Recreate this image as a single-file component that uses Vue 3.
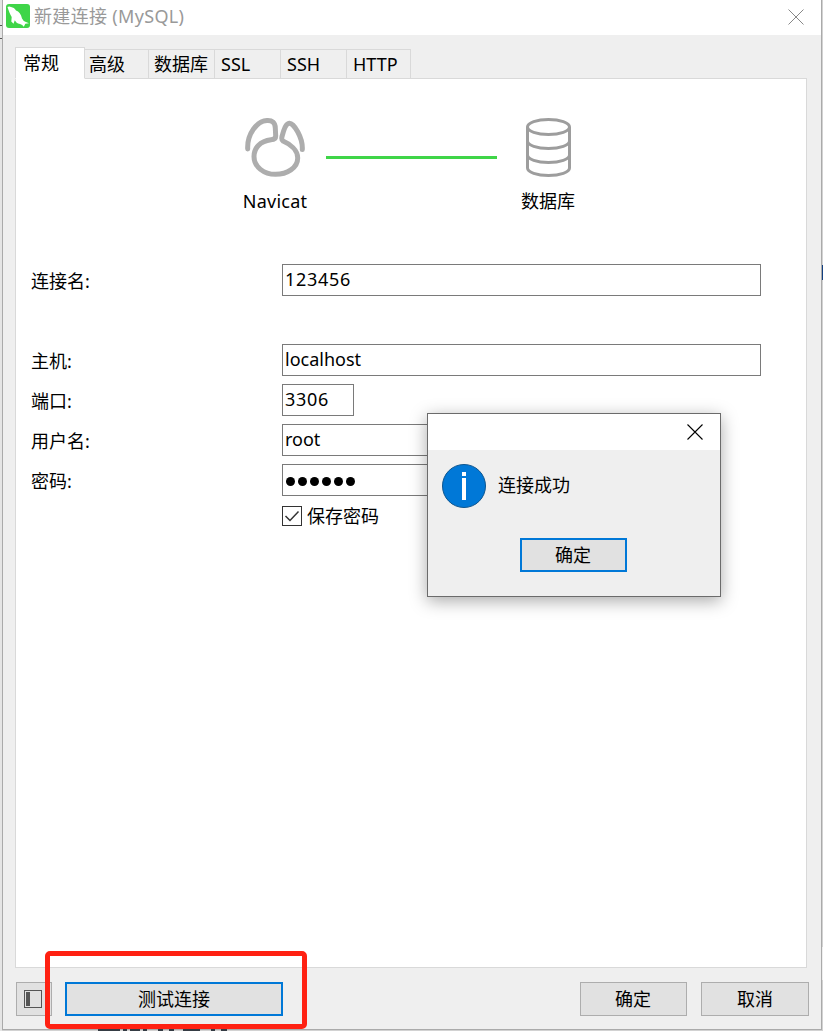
<script setup>
import { ref } from 'vue'

const tabs = [
  { label: '常规', width: 70 },
  { label: '高级', width: 64 },
  { label: '数据库', width: 66 },
  { label: 'SSL', width: 66, latin: true },
  { label: 'SSH', width: 66, latin: true },
  { label: 'HTTP', width: 64, latin: true },
]
const active = ref(0)
const fields = [
  { label: '连接名:', value: '123456', cls: 'digits spaced' },
  { label: '主机:', value: 'localhost', cls: '' },
  { label: '端口:', value: '3306', cls: 'digits short' },
  { label: '用户名:', value: 'root', cls: 'medium' },
]
</script>

<template>
  <div class="screen">
    <div class="behind">
      <i class="b-left"></i><i class="b-right"></i><i class="b-line one"></i><i class="b-line two"></i><i class="b-low"></i>
    </div>
    <main class="window">
      <header class="titlebar">
        <svg class="logo" width="24" height="24" viewBox="0 0 24 24">
          <rect width="24" height="24" rx="3" fill="#3fd548" />
          <path d="M1.500 3Q3 2 5 3C7 3.300 9 4.500 10 6.500C13 7.500 15 10 16 14.500Q17 17 20 18L23 19.300L19.300 19.700L17.800 22.800Q16.500 20.500 14 20C11 20 10 18 8.800 16.300L7.500 19.800L5.300 17.500L5.700 13C4 10 2.500 6.500 1.500 3Z" fill="#fff" />
        </svg>
        <span class="title">新建连接 (MySQL)</span>
        <svg class="close" width="16" height="16" viewBox="0 0 16 16"><path d="M.5.5l15 15M15.500.5l-15 15" stroke="#888" fill="none" /></svg>
      </header>
      <nav class="tabs">
        <button v-for="(t, i) in tabs" :key="t.label" class="tab" :class="{ active: active === i, latin: t.latin }" :style="{ width: t.width + 'px' }" @click="active = i"><span>{{ t.label }}</span></button>
      </nav>
      <section class="panel">
        <div class="diagram">
          <figure class="node app-node">
            <svg width="64" height="62" viewBox="0 0 64 62" fill="none" stroke="#adadad" stroke-width="5" stroke-linecap="round" stroke-linejoin="round">
              <path d="M3.700 33C3 18 13 5 23 4.500Q31 4 31.300 12L31.700 20Q31.700 23.500 27 23.700C16 25 10 32 10 40.500C10 51 20 58.300 31.500 58.300C43 58.300 53.700 52 53.700 42C53.700 34 46 28 39 25Q37.300 24 38 20.500C40 13 42 7.500 45.300 7.300C50 7 59 22 58.300 33.500" />
            </svg>
            <figcaption>Navicat</figcaption>
          </figure>
          <div class="link"></div>
          <figure class="node db-node">
            <svg width="48" height="62" viewBox="0 0 48 62" fill="none" stroke="#9d9d9d" stroke-width="3">
              <ellipse cx="24.500" cy="11" rx="21" ry="7.500" />
              <path d="M3.500 11V52A21 7.500 0 0 0 45.500 52V11M3.500 25A21 7.500 0 0 0 45.500 25M3.500 39A21 7.500 0 0 0 45.500 39" />
            </svg>
            <figcaption>数据库</figcaption>
          </figure>
        </div>
        <div class="form">
          <div v-for="f in fields" :key="f.label" class="row" :class="f.cls">
            <span class="label">{{ f.label }}</span><div class="field"><span>{{ f.value }}</span></div>
          </div>
          <div class="row medium">
            <span class="label">密码:</span><div class="field password"><i v-for="n in 6" :key="n"></i></div>
          </div>
          <div class="remember">
            <svg width="20" height="20" viewBox="0 0 20 20" fill="none" stroke="#333"><rect x=".5" y=".5" width="19" height="19" /><path d="M3.500 10L8 14.500L16.500 5.500" stroke-width="1.5" /></svg>
            <span>保存密码</span>
          </div>
        </div>
      </section>
      <footer class="actions">
        <button class="btn toggle">
          <svg width="18" height="18" viewBox="0 0 18 18"><rect x=".5" y=".5" width="17" height="17" fill="none" stroke="#555" /><rect x="2" y="2" width="4" height="14" fill="#555" /></svg>
        </button>
        <button class="btn primary test">测试连接</button>
        <button class="btn ok">确定</button>
        <button class="btn cancel">取消</button>
      </footer>
    </main>

    <svg class="fragments" width="130" height="3" viewBox="0 0 130 3">
      <path d="M0 1h22v2H0zM25 1h4v2h-4zM32 1h10v2H32zM45 1h4v2h-4zM60 1h5v2h-5zM71 1h5v2h-5zM85 1h17v2H85zM113 1h4v2h-4zM123 1h6v2h-6z" fill="#353c44" />
    </svg>
    <div class="highlight"></div>

    <div class="dialog">
      <div class="dialog-title">
        <svg width="16" height="16" viewBox="0 0 16 16"><path d="M.5.5l15 15M15.500.5l-15 15" stroke="#000" stroke-width="1.1" fill="none" /></svg>
      </div>
      <div class="message">
        <svg width="44" height="44" viewBox="0 0 44 44"><circle cx="22" cy="22" r="21.500" fill="#0078d7" stroke="#0d558f" /><path d="M20 8h4v4h-4zM20 14h4v22h-4z" fill="#fff" /></svg>
        <span>连接成功</span>
      </div>
      <button class="btn primary dialog-ok">确定</button>
    </div>
  </div>
</template>

<style>
body { background: #d2d2d2; overflow: hidden; }
</style>
<style scoped>
* { box-sizing: border-box; }
.screen { position: relative; width: 823px; height: 1031px; overflow: hidden; background: #d2d2d2; font: 18px/26px "Noto Sans", "Noto Sans CJK SC", sans-serif; color: #000; }
button { font: inherit; color: inherit; padding: 0; margin: 0; }
svg { display: block; flex: none; }
.behind i { position: absolute; }
.b-left { left: 0; top: 0; width: 2px; height: 1031px; background: #e5e5e5; }
.b-right { left: 822px; top: 265px; width: 1px; height: 15px; background: #123f80; }
.b-line { left: 0; width: 2px; height: 1px; background: #555; }
.one { top: 25px; }
.two { top: 38px; }
.b-low { left: 822px; top: 947px; width: 1px; height: 33px; background: #eee; }
.window { position: relative; display: flex; flex-direction: column; width: 820px; height: 1030px; margin-left: 2px; background: #efefef; border: 1px solid #aaa; border-top: 0; }
.titlebar { height: 35px; flex: none; display: flex; align-items: center; background: #fff; padding: 0 17px 3px 3px; color: #999; }
.title { margin-left: 4px; white-space: nowrap; letter-spacing: .33px; }
.close { margin-left: auto; position: relative; top: 1px; }
.tabs { height: 44px; flex: none; display: flex; align-items: flex-end; padding-left: 12px; position: relative; z-index: 1; }
.tab { height: 30px; border: 1px solid #d9d9d9; border-left: 0; background: #efefef; text-align: left; padding-left: 5px; line-height: 28px; white-space: nowrap; }
.tab.active { height: 32px; background: #fff; border-left: 1px solid #d9d9d9; border-bottom-color: #fff; padding-left: 7px; line-height: 30px; }
.tab.latin { padding-left: 6px; }
.tab:nth-child(2) { padding-left: 4px; }
.panel { margin: -1px 14px 0 12px; height: 890px; flex: none; background: #fff; border: 1px solid #d9d9d9; }
.diagram { display: flex; align-items: flex-start; padding: 37px 0 0 227px; height: 185px; }
.node { margin: 0; display: flex; flex-direction: column; align-items: center; }
.app-node { width: 66px; }
.node figcaption { margin-top: 10px; white-space: nowrap; }
.app-node figcaption { letter-spacing: .25px; margin-right: 2px; }
.link { width: 171px; height: 3px; background: #3fd548; margin: 40px 24px 0 17px; }
.db-node { width: 54px; }
.row { display: flex; height: 32px; margin-bottom: 8px; }
.row.spaced { margin-bottom: 48px; }
.label { flex: none; width: 251px; padding-left: 15px; line-height: 34px; }
.field { width: 479px; flex: none; margin-left: 15px; border: 1px solid #7a7a7a; padding-left: 2px; line-height: 28px; }
.short .field { width: 72px; }
.medium .field { width: 240px; }
.digits .field { letter-spacing: .7px; }
.field.password { display: flex; gap: 3px; align-items: center; padding: 2px 0 0 3px; }
.password i { width: 9px; height: 9px; border-radius: 50%; background: #000; }
.remember { display: flex; align-items: center; height: 26px; margin: -1px 0 0 266px; gap: 5px; }
.actions { display: flex; padding: 14px 12px 0 13px; }
.btn { height: 34px; border: 1px solid #adadad; background: #e1e1e1; text-align: center; line-height: 32px; }
.primary { border: 2px solid #0078d7; line-height: 30px; }
.toggle { width: 36px; padding-left: 7px; }
.test { width: 218px; margin-left: 13px; }
.ok { width: 107px; margin-left: auto; padding-right: 1px; }
.cancel { width: 108px; margin-left: 14px; }
.fragments { position: absolute; left: 98px; top: 1028px; }
.highlight { position: absolute; left: 45px; top: 951px; width: 262px; height: 78px; border: 5px solid #ff2112; border-radius: 5px; pointer-events: none; }
.dialog { position: absolute; left: 427px; top: 413px; width: 294px; height: 184px; border: 1px solid #6b6b6b; background: #efefef; box-shadow: 0 4px 16px rgba(0,0,0,.34); }
.dialog-title { display: flex; align-items: center; justify-content: flex-end; height: 36px; background: #fff; padding: 0 17px 1px 0; }
.message { display: flex; align-items: center; gap: 12px; margin: 14px 0 0 14px; }
.message span { margin-top: -2px; }
.dialog-ok { display: block; width: 107px; margin: 30px 0 0 92px; padding-right: 1px; }
</style>
